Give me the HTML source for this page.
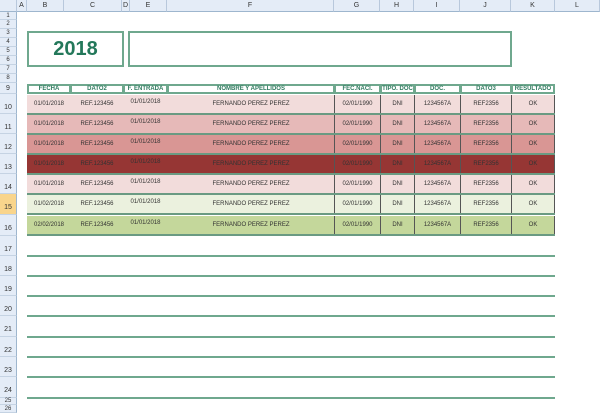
<!DOCTYPE html><html><head><style>
body{margin:0;width:600px;height:413px;overflow:hidden;background:#fff;font-family:"Liberation Sans",sans-serif;position:relative}
div{position:absolute;box-sizing:border-box}
.ch{top:0;height:12px;background:#e4ecf7;border-right:1px solid #b8c8dc;border-bottom:1px solid #9eb6ce;font-size:7px;color:#333;text-align:center;line-height:12px}
.rh{left:0;width:17px;background:#e4ecf7;border-bottom:1px solid #c5d3e3;border-right:1px solid #9eb6ce;font-size:7px;color:#333;text-align:center}
.hd{top:84px;height:10px;border:2px solid #6fa88e;font-size:6px;font-weight:bold;color:#2e7a5e;text-align:center;line-height:7px}
.row{left:27px;width:528px;height:20px;border-bottom:2px solid #6a9a82}
.c{top:0;height:100%;font-size:6px;color:#333;text-align:center;line-height:18px}
.v{top:0;height:100%;border-left:1px solid #555}
.gl{left:27px;width:528px;height:2px;background:#6fa88e}
</style></head><body>
<div class="ch" style="left:0;width:17px"></div>
<div class="ch" style="left:17px;width:10px">A</div>
<div class="ch" style="left:27px;width:37px">B</div>
<div class="ch" style="left:64px;width:58px">C</div>
<div class="ch" style="left:122px;width:8px">D</div>
<div class="ch" style="left:130px;width:37px">E</div>
<div class="ch" style="left:167px;width:167px">F</div>
<div class="ch" style="left:334px;width:46px">G</div>
<div class="ch" style="left:380px;width:34px">H</div>
<div class="ch" style="left:414px;width:46px">I</div>
<div class="ch" style="left:460px;width:51px">J</div>
<div class="ch" style="left:511px;width:44px">K</div>
<div class="ch" style="left:555px;width:45px">L</div>

<div class="rh" style="top:12px;height:8px;font-size:6px;line-height:8px">1</div>
<div class="rh" style="top:20px;height:9px;font-size:6px;line-height:9px">2</div>
<div class="rh" style="top:29px;height:9px;font-size:6px;line-height:9px">3</div>
<div class="rh" style="top:38px;height:9px;font-size:6px;line-height:9px">4</div>
<div class="rh" style="top:47px;height:9px;font-size:6px;line-height:9px">5</div>
<div class="rh" style="top:56px;height:9px;font-size:6px;line-height:9px">6</div>
<div class="rh" style="top:65px;height:9px;font-size:6px;line-height:9px">7</div>
<div class="rh" style="top:74px;height:9px;font-size:6px;line-height:9px">8</div>
<div class="rh" style="top:83px;height:11px;line-height:11px">9</div>
<div class="rh" style="top:94px;height:20px;line-height:28px">10</div>
<div class="rh" style="top:114px;height:20px;line-height:28px">11</div>
<div class="rh" style="top:134px;height:20px;line-height:28px">12</div>
<div class="rh" style="top:154px;height:20px;line-height:28px">13</div>
<div class="rh" style="top:174px;height:20px;line-height:28px">14</div>
<div class="rh" style="top:194px;height:21px;line-height:28px;background:#f9d58c">15</div>
<div class="rh" style="top:215px;height:21px;line-height:28px">16</div>
<div class="rh" style="top:236px;height:20px;line-height:28px">17</div>
<div class="rh" style="top:256px;height:20px;line-height:28px">18</div>
<div class="rh" style="top:276px;height:20px;line-height:28px">19</div>
<div class="rh" style="top:296px;height:20px;line-height:28px">20</div>
<div class="rh" style="top:316px;height:21px;line-height:28px">21</div>
<div class="rh" style="top:337px;height:20px;line-height:28px">22</div>
<div class="rh" style="top:357px;height:20px;line-height:28px">23</div>
<div class="rh" style="top:377px;height:21px;line-height:28px">24</div>
<div class="rh" style="top:398px;height:7px;font-size:6px;line-height:7px">25</div>
<div class="rh" style="top:405px;height:8px;font-size:6px;line-height:8px">26</div>

<div style="left:27px;top:31px;width:97px;height:36px;border:2px solid #6fa88e;font-size:20px;font-weight:bold;color:#23785a;text-align:center;line-height:32px">2018</div>
<div style="left:128px;top:31px;width:384px;height:36px;border:2px solid #6fa88e"></div>

<div class="hd" style="left:27px;width:44px">FECHA</div>
<div class="hd" style="left:70px;width:54px">DATO2</div>
<div class="hd" style="left:123px;width:45px">F. ENTRADA</div>
<div class="hd" style="left:167px;width:168px">NOMBRE Y APELLIDOS</div>
<div class="hd" style="left:334px;width:47px">FEC.NACI.</div>
<div class="hd" style="left:380px;width:35px">TIPO. DOC</div>
<div class="hd" style="left:414px;width:47px">DOC.</div>
<div class="hd" style="left:460px;width:52px">DATO3</div>
<div class="hd" style="left:511px;width:44px">RESULTADO</div>

<div id="rows"></div>
<script>
var cols=[["01/01/2018",27,44],["REF.123456",70,54],["01/01/2018",123,45],["FERNANDO PEREZ PEREZ",167,168],["02/01/1990",334,47],["DNI",380,35],["1234567A",414,47],["REF2356",460,52],["OK",511,44]];
var rows=[[95,"#f2dcdb","01/01/2018"],[115,"#e6b9b8","01/01/2018"],[135,"#d99694","01/01/2018"],[155,"#963634","01/01/2018"],[175,"#f2dcdb","01/01/2018"],[195,"#ebf1de","01/02/2018"],[216,"#c4d79b","02/02/2018"]];
var h="";
rows.forEach(function(r){h+='<div class="row" style="top:'+r[0]+'px;background:'+r[1]+'">';
cols.forEach(function(c,i){var t=i==0?r[2]:c[0];h+='<div class="c" style="left:'+(c[1]-27)+'px;width:'+c[2]+'px;'+(i==2?'line-height:14px':'')+'">'+t+'</div>';if(i>=4)h+='<div class="v" style="left:'+(c[1]-27)+'px"></div>';});
h+='<div class="v" style="left:527px"></div></div>';});
[256,276,296,316,337,357,377,398].forEach(function(y){h+='<div class="gl" style="top:'+(y-1)+'px"></div>';});
document.getElementById("rows").outerHTML=h;
</script>
</body></html>
